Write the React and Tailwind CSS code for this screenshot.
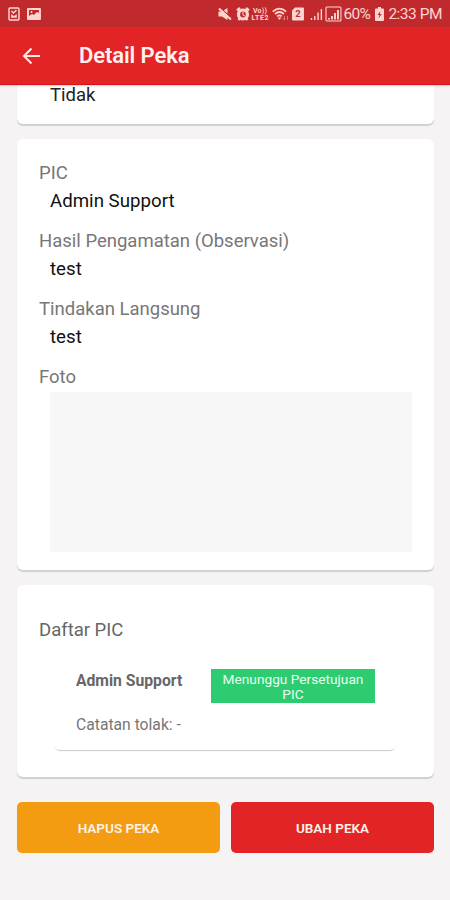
import React from 'react'

const details = [
  { label: 'PIC', value: 'Admin Support' },
  { label: 'Hasil Pengamatan (Observasi)', value: 'test' },
  { label: 'Tindakan Langsung', value: 'test' },
]

const StatusBar = () => (
  <div className="flex h-[27px] items-center bg-[#c12a2d] px-2 text-[#ffd5d0]">
    {/* Notifications */}
    <svg width="12" height="14" viewBox="0 0 12 14" fill="none" stroke="currentColor" strokeWidth="1.5">
      <rect x="1" y="1" width="10" height="12" rx="1" />
      <path d="M3.5 4 5.5 6 8.5 3M4 11V8.5l2 1.5 2-1.5V11" />
    </svg>
    <svg className="ml-[7px]" width="14" height="12" viewBox="0 0 14 12">
      <path fill="currentColor" fillRule="evenodd" d="M1 0h12a1 1 0 0 1 1 1v10a1 1 0 0 1-1 1H1a1 1 0 0 1-1-1V1a1 1 0 0 1 1-1ZM2 2v6l3-2 2 1 3-3 2 1V2Z" />
      <circle cx="4.5" cy="4" r="1" fill="currentColor" />
    </svg>

    {/* System icons */}
    <svg className="ml-[177px]" width="14" height="14" viewBox="0 0 14 14">
      <path fill="currentColor" d="M.5 4.500h3.500L9.500 1v12L4 9.500H.5Z" />
      <path d="M2 .8 13.500 11" stroke="#c12a2d" strokeWidth="1.2" />
      <path d="M1 1.500 13 12.500" stroke="currentColor" strokeWidth="2" />
    </svg>
    <svg className="ml-1" width="14" height="14" viewBox="0 0 14 14" fill="none" stroke="currentColor">
      <circle cx="7" cy="7.5" r="4.5" strokeWidth="3.2" />
      <path d="M1 3.5 4 1M13 3.5 10 1M2.5 13l1.5-2M11.5 13 10 11" strokeWidth="2.4" />
      <path d="M7 5v3l2 1" strokeWidth="1" />
    </svg>
    <svg className="ml-px" width="18" height="14" viewBox="0 0 18 14" fill="currentColor" fontFamily="Roboto, sans-serif" fontWeight="700">
      <text x="2" y="6.5" fontSize="7" textLength="14">Vo))</text>
      <text x="0.5" y="13.2" fontSize="7" textLength="17">LTE2</text>
    </svg>
    <svg className="ml-[3px]" width="17" height="14" viewBox="0 0 17 14" fill="none" stroke="currentColor" strokeWidth="1.7">
      <path d="M.8 4.5q6.7-6 13.4 0M3 7q4.5-4 9 0M5.2 9.3q2.3-2 4.6 0" />
      <path d="m6 10.8 1.5 1.7L9 10.8Z" fill="currentColor" strokeWidth=".5" />
      <path d="M12.5 9v4M11.3 11.5l1.2 1.5M15.5 13V9" strokeWidth="1" opacity=".5" />
    </svg>
    <svg className="ml-[3px]" width="12" height="14" viewBox="0 0 12 14">
      <path fill="currentColor" d="M3 .5h8a1 1 0 0 1 1 1v11a1 1 0 0 1-1 1H1a1 1 0 0 1-1-1v-9Z" />
      <text x="6" y="10.5" fontSize="9.5" fontWeight="700" fontFamily="Roboto, sans-serif" textAnchor="middle" fill="#c12a2d">2</text>
    </svg>
    <svg className="ml-[6px]" width="13" height="14" viewBox="0 0 13 14" stroke="currentColor" strokeWidth="1.4">
      <path d="M1.5 13v-2M4.8 13V9M8.1 13V5.5M11.4 13V2" />
    </svg>
    <svg className="ml-[2px]" width="17" height="16" viewBox="0 0 17 16" fill="none" stroke="currentColor">
      <rect x="1" y="1" width="15" height="14" rx="1" strokeWidth="1.1" />
      <path d="M4 13.5V12M7 13.5V10M10 13.5V7M13 13.5V4" strokeWidth="1.9" />
    </svg>
    <span className="ml-[2px] w-[28px] whitespace-nowrap pt-[3px] text-[15.5px] leading-none tracking-[-0.75px]">60%</span>
    <svg className="ml-[4px]" width="9" height="14" viewBox="0 0 9 14">
      <path fill="currentColor" d="M3 0h3v1.5h2a1 1 0 0 1 1 1V13a1 1 0 0 1-1 1H1a1 1 0 0 1-1-1V2.500a1 1 0 0 1 1-1h2Z" />
      <path d="M5.500 4 2.500 8h2L3.500 11.500 6.800 7H4.800Z" fill="#c12a2d" />
    </svg>
    <span className="ml-[4px] whitespace-nowrap pt-[3px] text-[15.5px] leading-none tracking-[-0.5px]">2:33 PM</span>
  </div>
)

const Header = () => (
  <header className="relative flex h-[58px] items-center border-b border-[#cf1517] bg-[#e32427] pl-[22px] text-white shadow-[0_1px_2px_rgba(0,0,0,0.2)]">
    <svg width="19" height="18" viewBox="0 0 19 18" fill="none" stroke="#ffe9e6" strokeWidth="2">
      <path d="M18 9H2M9.500 1.500 2 9l7.500 7.500" />
    </svg>
    <h1 className="ml-[38px] pt-px text-[22px] font-semibold leading-none tracking-[-0.1px] text-[#fff0ee]">Detail Peka</h1>
  </header>
)

const Card = ({ className, children }) => (
  <section className={`ml-[17px] mr-4 rounded-md bg-white shadow-[0_2px_1px_rgba(0,0,0,0.15)] ${className}`}>
    {children}
  </section>
)

const App = () => {
  return (
    <div className="h-[900px] w-[450px] overflow-hidden bg-[#f5f3f4] font-['Roboto',sans-serif]">
      <StatusBar />
      <Header />

      {/* Tail of the previous card */}
      <Card className="h-[39px] rounded-t-none pl-[33px]">
        <p className="text-[18.5px] leading-[20px] text-[#222]">Tidak</p>
      </Card>

      {/* Observation details */}
      <Card className="mt-[15px] h-[431px] px-[22px] pt-[23px]">
        {details.map((item) => (
          <div key={item.label} className="h-[68px]">
            <p className="text-[18.5px] leading-[22px] text-[#777]">{item.label}</p>
            <p className="mt-[6px] pl-[11px] text-[18.7px] leading-[22px] text-[#111]">{item.value}</p>
          </div>
        ))}
        <p className="text-[18.5px] leading-[22px] text-[#777]">Foto</p>
        <div className="ml-[11px] mt-1 h-[160px] w-[362px] bg-[#f7f7f7]" />
      </Card>

      {/* PIC list */}
      <Card className="mt-[15px] h-[192px] px-[22px] pt-[34px]">
        <h2 className="text-[18.5px] leading-[22px] text-[#666]">Daftar PIC</h2>
        <div className="ml-[15px] mt-[17px] h-[92px] w-[342px] rounded-md pl-[22px] pt-[11px] shadow-[0_2px_1px_-1px_rgba(0,0,0,0.22)]">
          <div className="flex">
            <p className="w-[135px] pt-[2px] text-[15.7px] font-bold leading-[20px] text-[#666]">Admin Support</p>
            <div className="h-[34px] w-[164px] bg-[#2ecc71] px-2 pt-[3px] text-center text-[13.7px] leading-[15px] text-[#e8fff0]">
              Menunggu Persetujuan PIC
            </div>
          </div>
          <p className="mt-[12px] text-[15.7px] leading-[20px] text-[#777]">Catatan tolak: -</p>
        </div>
      </Card>

      <div className="ml-[17px] mr-4 mt-[25px] flex gap-[11px] text-[13.5px] font-semibold text-[#fff3e6]">
        <button className="h-[51px] flex-1 rounded-[5px] bg-[#f39c12] pt-[2px]">HAPUS PEKA</button>
        <button className="h-[51px] flex-1 rounded-[5px] bg-[#e32427] pt-[2px]">UBAH PEKA</button>
      </div>
    </div>
  )
}

export default App
